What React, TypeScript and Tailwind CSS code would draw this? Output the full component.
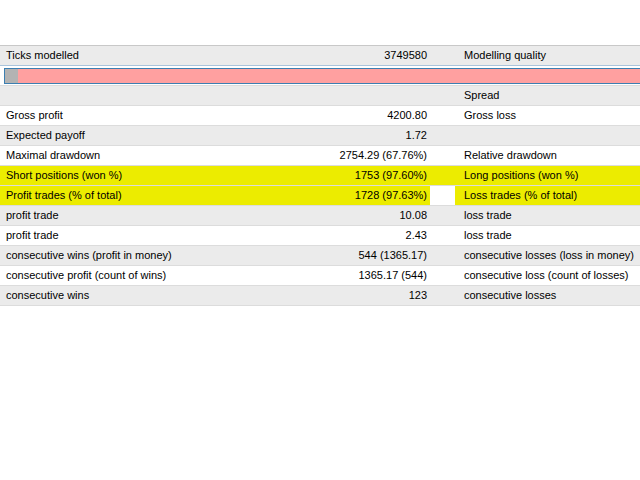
const rows: [string, string, string, string][] = [
  ['', '', 'Spread', 'bg-[#ebebeb]'],
  ['Gross profit', '4200.80', 'Gross loss', 'bg-white'],
  ['Expected payoff', '1.72', '', 'bg-[#ebebeb]'],
  ['Maximal drawdown', '2754.29 (67.76%)', 'Relative drawdown', 'bg-white'],
  ['Short positions (won %)', '1753 (97.60%)', 'Long positions (won %)', 'hl1'],
  ['Profit trades (% of total)', '1728 (97.63%)', 'Loss trades (% of total)', 'hl2'],
  ['profit trade', '10.08', 'loss trade', 'bg-[#ebebeb]'],
  ['profit trade', '2.43', 'loss trade', 'bg-white'],
  ['consecutive wins (profit in money)', '544 (1365.17)', 'consecutive losses (loss in money)', 'bg-[#ebebeb]'],
  ['consecutive profit (count of wins)', '1365.17 (544)', 'consecutive loss (count of losses)', 'bg-white'],
  ['consecutive wins', '123', 'consecutive losses', 'bg-[#ebebeb]'],
]

export default function App() {
  return (
    <div className="w-[640px] h-[480px] bg-white overflow-hidden text-[11px] text-black" style={{ fontFamily: '"Liberation Sans", Arial, sans-serif' }}>
      <div className="h-[45px] bg-white" />
      <div className="border-t border-[#c8c8c8]">
        <div className="flex h-[20px] items-center bg-[#ebebeb] border-b border-[#a9c4dc] whitespace-nowrap">
          <div className="w-[220px] shrink-0 pl-[6px]">Ticks modelled</div>
          <div className="w-[207px] shrink-0 text-right">3749580</div>
          <div className="pl-[37px]">Modelling quality</div>
        </div>
        <div className="h-[20px] flex items-center border-b border-[#dcdcdc] pl-[4px]">
          <div className="flex-1 h-[16px] border border-[#3c7fb1] border-r-0 bg-[#ffa0a0] flex">
            <div className="w-[13px] bg-[#b3b3b3]" />
          </div>
        </div>
        {rows.map(([a, b, c, bg], i) => {
          const hl = bg.startsWith('hl')
          return (
            <div key={i} className={`flex h-[20px] items-center border-b border-[#dcdcdc] whitespace-nowrap overflow-hidden ${hl ? (bg === 'hl1' ? 'bg-[#ecec00]' : 'bg-white') : bg}`}>
              <div className={`w-[430px] shrink-0 h-full flex items-center ${hl ? 'bg-[#ecec00]' : ''}`}>
                <div className="w-[220px] shrink-0 pl-[6px]">{a}</div>
                <div className="w-[207px] shrink-0 text-right">{b}</div>
              </div>
              <div className={`flex-1 h-full flex items-center ml-[25px] pl-[9px] ${hl ? 'bg-[#ecec00]' : ''}`}>{c}</div>
            </div>
          )
        })}
      </div>
    </div>
  )
}
